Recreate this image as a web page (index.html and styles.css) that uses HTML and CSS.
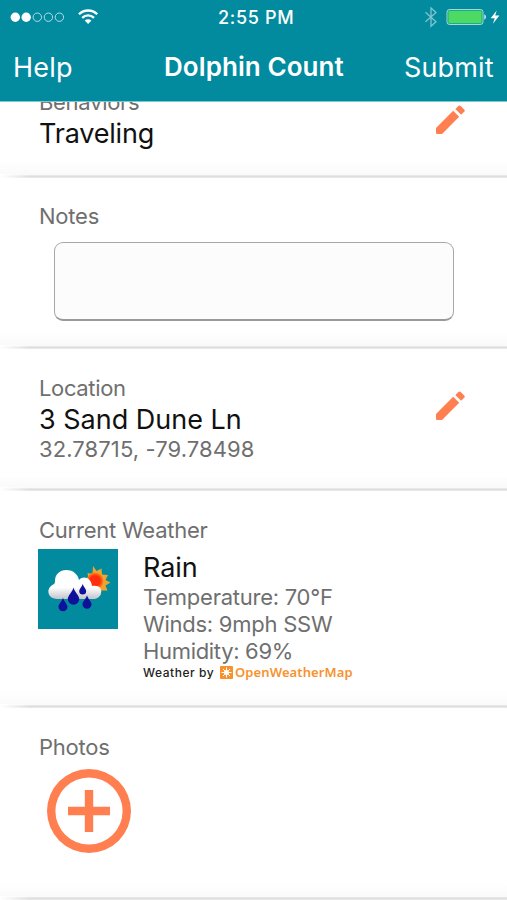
FILE: index.html
```
<!DOCTYPE html>
<html lang="en">
<head>
<meta charset="utf-8">
<title>Dolphin Count</title>
<link rel="stylesheet" href="styles.css">
</head>
<body>
<svg class="defs" width="0" height="0" aria-hidden="true">
  <symbol id="pencil" viewBox="3 3 18 18"><path d="M3 17.250V20.500l.5.500h3.250L17.400 10.350l-3.750-3.750L3 17.250zM20.500 7.200a1 1 0 0 0 0-1.410l-2.200-2.200a1 1 0 0 0-1.410 0l-1.900 1.900 3.600 3.600 1.910-1.890z"/></symbol>
</svg>
<header class="header">
  <div class="status">
    <svg class="signal" width="77" height="34" viewBox="0 0 77 34">
      <g fill="#fff"><circle cx="15.300" cy="17.200" r="4.700"/><circle cx="26.200" cy="17.200" r="4.700"/></g>
      <g fill="none" stroke="#b5dde3" stroke-width="1"><circle cx="37.300" cy="17.200" r="4.200"/><circle cx="48.400" cy="17.200" r="4.200"/><circle cx="59.400" cy="17.200" r="4.200"/></g>
    </svg>
    <svg class="wifi" width="22" height="34" viewBox="77 0 22 34">
      <g fill="none" stroke="#fff" stroke-width="2.300"><path d="M79 14.200a13 13 0 0 1 18.200 0"/><path d="M82.200 17.900a8.300 8.300 0 0 1 11.800 0"/></g>
      <path d="M84.700 20.600a4.900 4.900 0 0 1 6.800 0L88.100 24z" fill="#fff"/>
    </svg>
    <span class="time">2:55 PM</span>
    <svg class="power" width="84" height="34" viewBox="423 0 84 34">
      <path d="M425.500 12.200l10.500 9.500-5 4.600V8l5 4.500-10.500 9.200" fill="none" stroke="#80c4cf" stroke-width="1.300"/>
      <rect x="447" y="9.500" width="36" height="15" rx="2.500" fill="#4cd964" stroke="#a5d6dd" stroke-width="1"/>
      <rect x="448" y="10.500" width="34" height="13" rx="1.500" fill="none" stroke="#028b9f" stroke-width=".6"/>
      <path d="M484.300 14.300a3 3 0 0 1 0 5.400z" fill="#d7edf0"/>
      <path d="M496.700 10.500l-6 7.700h4l-1.800 5.600 6.500-8.200h-4.200z" fill="#fff"/>
    </svg>
  </div>
  <nav class="nav"><a class="help">Help</a><h1 class="title">Dolphin Count</h1><a class="submit">Submit</a></nav>
</header>
<main>
  <section class="card behaviors">
    <div class="text"><p class="label behaviors-label">Behaviors</p><p class="value traveling">Traveling</p></div>
    <svg class="edit"><use href="#pencil"/></svg>
  </section>
  <section class="card notes">
    <div class="text"><p class="label notes-label">Notes</p><div class="input"></div></div>
  </section>
  <section class="card location">
    <div class="text"><p class="label">Location</p><p class="value street">3 Sand Dune Ln</p><p class="detail coords">32.78715, -79.78498</p></div>
    <svg class="edit"><use href="#pencil"/></svg>
  </section>
  <section class="card weather">
    <div class="text">
      <p class="label current">Current Weather</p>
      <div class="report">
        <svg class="tile" viewBox="0 0 80 80">
          <defs>
            <linearGradient id="cloud" x1="0" y1="0" x2="0" y2="1"><stop offset=".6" stop-color="#fff"/><stop offset="1" stop-color="#c2c4ca"/></linearGradient>
            <radialGradient id="sun"><stop offset=".6" stop-color="#ff2d0c"/><stop offset="1" stop-color="#ff8a1c"/></radialGradient>
            <path id="drop" d="M0-7C1-3 5 0 5 3a5 5 0 0 1-10 0C-5 0-1-3 0-7z"/>
          </defs>
          <rect width="80" height="80" fill="#028b9f"/>
          <path d="M55 17l3.500 5 5-2.500.5 6 6 .5-2.500 5 5 2.500-5 3 2 5-6 0-1 5-5-3-4 4-2-6-6-1 3-5-4-4 6-1.500-1-6 5 1z" fill="#efa52d"/>
          <circle cx="57" cy="32" r="8.500" fill="url(#sun)"/>
          <path d="M19 50c-9 0-11-9-6-13 3-2 4-2 4-5 0-7 5-11 11-11 8 0 12 5 13 10 5-5 12-2 13 6 7-1 10 2 9 7-1 4-4 6-8 6z" fill="url(#cloud)"/>
          <g fill="#10109a"><use href="#drop" transform="translate(35.500 46.500) scale(1.150)"/><use href="#drop" transform="translate(44.700 40) scale(.7)"/><use href="#drop" transform="translate(25 55) scale(.9)"/><use href="#drop" transform="translate(49 52.500) scale(.9)"/></g>
        </svg>
        <div class="facts">
          <p class="value rain">Rain</p>
          <p class="detail temp">Temperature: 70°F</p>
          <p class="detail winds">Winds: 9mph SSW</p>
          <p class="detail humidity">Humidity: 69%</p>
          <p class="credit"><span class="by">Weather by</span><svg class="owm" viewBox="0 0 13 13"><rect width="13" height="13" rx="1" fill="#f7922e"/><path d="M6.500 1.500v10M1.500 6.500h10M3 3l7 7M10 3l-7 7" stroke="#fff" stroke-width="1"/><circle cx="6.500" cy="6.500" r="2.500" fill="#fff"/></svg><span class="brand">OpenWeatherMap</span></p>
        </div>
      </div>
    </div>
  </section>
  <section class="card photos">
    <div class="text"><p class="label photos-label">Photos</p>
      <svg class="add" viewBox="2 2 20 20"><path d="M13 7h-2v4H7v2h4v4h2v-4h4v-2h-4V7zm-1-5a10 10 0 1 0 0 20 10 10 0 0 0 0-20zm0 18a8 8 0 1 1 0-16 8 8 0 0 1 0 16z"/></svg>
    </div>
  </section>
</main>
</body>
</html>
```
FILE: styles.css
```
* { box-sizing: border-box; margin: 0; padding: 0; }
body { width: 507px; height: 900px; overflow: hidden; background: #fff; font-family: Inter, "Liberation Sans", sans-serif; }
.defs { display: block; }
svg { flex: none; }
p, a, h1, .time { white-space: nowrap; }

.header { height: 102px; background: #028b9f; border-bottom: 1px solid #80c5cf; color: #fff; }
.status { display: grid; grid-template-columns: 77px 22px 1fr 84px; height: 34px; }
.time { padding-left: 119px; font-size: 18px; font-weight: 500; line-height: 35px; letter-spacing: .7px; }
.nav { display: grid; grid-template-columns: 151px 240px 1fr; height: 67px; line-height: 68px; font-size: 27px; }
.help { padding-left: 13px; letter-spacing: .2px; }
.title { padding-left: 13px; font-size: 26px; font-weight: 600; line-height: 66px; letter-spacing: .08px; }
.submit { padding-left: 13px; letter-spacing: .15px; }

.card { display: flex; justify-content: space-between; padding: 0 42px 0 39px; overflow: hidden;
  background:
    linear-gradient(90deg, #fff, transparent 30px) bottom / 100% 4px no-repeat,
    linear-gradient(#ededed, #dedede, #ededed) 0 100% / 100% 3px no-repeat,
    linear-gradient(#fff, #f8f8f8) bottom / 100% 16px no-repeat, #fff; }
.behaviors { height: 76px; }
.notes { height: 171px; padding-top: 23px; }
.location { height: 142px; padding-top: 24px; }
.weather { height: 217px; padding-top: 24px; }
.photos { height: 192px; padding-top: 24px; }

.label, .detail { color: #6f6f6f; font-size: 22px; line-height: 30px; }
.label { letter-spacing: -.23px; }
.value { color: #111; font-size: 27px; line-height: 32px; }
.behaviors-label { margin-top: -15px; letter-spacing: -.3px; }
.traveling { letter-spacing: -.2px; line-height: 33px; }
.input { width: 400px; height: 79px; margin: 11px 0 0 15px; border: 1px solid #a8a8a8; border-bottom: 2px solid #999; border-radius: 9px; background: #fcfcfc; }
.edit { width: 29px; height: 29px; fill: #ff7f50; }
.behaviors .edit { margin-top: 3px; }
.location .edit { margin-top: 18px; }

.location .label { letter-spacing: -.35px; }
.street { margin-top: 1px; }
.coords { margin-top: -1px; line-height: 29px; letter-spacing: .1px; }
.report { display: flex; gap: 25px; margin-top: 4px; }
.tile { width: 80px; height: 80px; margin-left: -1px; }
.facts { margin-top: 3px; }
.facts .detail { line-height: 27px; letter-spacing: -.25px; }
.facts .humidity { letter-spacing: -.32px; }
.rain { letter-spacing: -.1px; }
.credit { display: flex; align-items: center; height: 14px; }
.by { width: 77px; color: #222; font-size: 12px; font-weight: 500; letter-spacing: .55px; }
.owm { width: 13px; height: 13px; }
.brand { margin-left: 2px; color: #f7922e; font-family: "Noto Sans", sans-serif; font-size: 13px; font-weight: 600; line-height: 14px; letter-spacing: .1px; }
.add { display: block; width: 84px; height: 84px; margin: 7px 0 0 8px; fill: #ff7f50; }
```
